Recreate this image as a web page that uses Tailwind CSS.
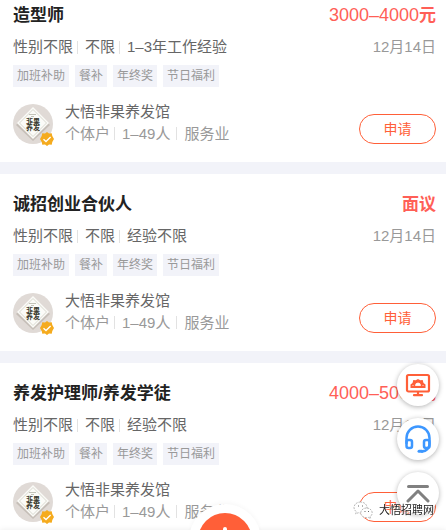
<!DOCTYPE html>
<html lang="zh-CN">
<head>
    <meta charset="UTF-8">
    <meta name="viewport" content="width=device-width, initial-scale=1.0">
    <title>大悟招聘网</title>
    <script src="https://cdn.jsdelivr.net/npm/@tailwindcss/browser@4"></script>
</head>
<body class="bg-[#f2f3f9] font-['Liberation_Sans','Noto_Sans_CJK_SC',sans-serif] text-[15px] text-[#666]">
    <!-- Shared drawings -->
    <svg class="hidden" aria-hidden="true">
        <symbol id="shopLogo" viewBox="0 0 40 40">
            <circle cx="20" cy="20" r="20" fill="#e0dad6"/>
            <path d="M20 5 37 21 20 37 3 21Z" fill="#c6bfb8"/>
            <path d="M20 3 36 19 20 35 4 19Z" fill="#fbfbf8"/>
            <path d="M20 5.500 33.500 19 20 32.500 6.500 19Z" fill="none" stroke="#cfd0c4" stroke-width=".8"/>
            <path d="M16 10.500h7M18 12.500h3" stroke="#a9aa9c" stroke-width=".7"/>
            <text x="20" y="19.500" text-anchor="middle" font-size="7" font-weight="700" fill="#3c3c30">非果</text>
            <text x="20" y="26" text-anchor="middle" font-size="7" font-weight="700" fill="#3c3c30">养发</text>
        </symbol>
        <symbol id="verified" viewBox="0 0 14 14">
            <path d="M7 0 9 1.500 11.700 1.300 12.300 4 14 7 12.300 10 11.700 12.700 9 12.500 7 14 5 12.500 2.300 12.700 1.700 10 0 7 1.700 4 2.300 1.300 5 1.500Z" fill="#f5ab1e"/>
            <path d="m3.500 7.200 2.500 2.300 4.600-4.500" fill="none" stroke="#fff" stroke-width="1.300"/>
        </symbol>
    </svg>

    <div class="h-screen overflow-hidden">
        <main class="-mt-[15px] space-y-3">
            <article class="bg-white pt-[17px] pr-[10px] pb-[18px] pl-[13px]">
                <div class="flex justify-between leading-7">
                    <h2 class="text-[17px] font-bold text-[#222]">造型师</h2>
                    <p class="text-[17px] font-bold text-[#ff5f57]"><span class="text-[18px] leading-none font-normal">3000–4000</span>元</p>
                </div>
                <div class="mt-[7px] flex items-center leading-5">
                    <span>性别不限</span>
                    <i class="mr-[7px] ml-1 h-[13px] w-px bg-[#e2e2e2]"></i>
                    <span>不限</span>
                    <i class="mr-[7px] ml-1 h-[13px] w-px bg-[#e2e2e2]"></i>
                    <span>1–3年工作经验</span>
                    <time class="ml-auto text-[#999]">12月14日</time>
                </div>
                <ul class="mt-2 flex gap-1.5 text-xs leading-[22px] text-[#999]">
                    <li class="bg-[#f2f3f9] px-1">加班补助</li>
                    <li class="bg-[#f2f3f9] px-1">餐补</li>
                    <li class="bg-[#f2f3f9] px-1">年终奖</li>
                    <li class="bg-[#f2f3f9] px-1">节日福利</li>
                </ul>
                <div class="mt-[14px] flex items-end">
                    <div class="relative mr-3 size-10">
                        <svg class="size-10"><use href="#shopLogo"/></svg>
                        <svg class="absolute -right-px -bottom-0.5 size-[14px]"><use href="#verified"/></svg>
                    </div>
                    <div>
                        <h3 class="leading-[22px]">大悟非果养发馆</h3>
                        <p class="flex items-center leading-[21px] text-[#999]">
                            <span>个体户</span>
                            <i class="mr-[7px] ml-1 h-[13px] w-px bg-[#e2e2e2]"></i>
                            <span>1–49人</span>
                            <i class="mr-[7px] ml-1.5 h-[13px] w-px bg-[#e2e2e2]"></i>
                            <span>服务业</span>
                        </p>
                    </div>
                    <button type="button" class="ml-auto h-[30px] w-[77px] rounded-full border border-[#ff5f38] text-[14px] leading-[26px] text-[#ff5f38]">申请</button>
                </div>
            </article>

            <article class="bg-white pt-[17px] pr-[10px] pb-[18px] pl-[13px]">
                <div class="flex justify-between leading-7">
                    <h2 class="text-[17px] font-bold text-[#222]">诚招创业合伙人</h2>
                    <p class="text-[17px] font-bold text-[#ff5f57]">面议</p>
                </div>
                <div class="mt-[7px] flex items-center leading-5">
                    <span>性别不限</span>
                    <i class="mr-[7px] ml-1 h-[13px] w-px bg-[#e2e2e2]"></i>
                    <span>不限</span>
                    <i class="mr-[7px] ml-1 h-[13px] w-px bg-[#e2e2e2]"></i>
                    <span>经验不限</span>
                    <time class="ml-auto text-[#999]">12月14日</time>
                </div>
                <ul class="mt-2 flex gap-1.5 text-xs leading-[22px] text-[#999]">
                    <li class="bg-[#f2f3f9] px-1">加班补助</li>
                    <li class="bg-[#f2f3f9] px-1">餐补</li>
                    <li class="bg-[#f2f3f9] px-1">年终奖</li>
                    <li class="bg-[#f2f3f9] px-1">节日福利</li>
                </ul>
                <div class="mt-[14px] flex items-end">
                    <div class="relative mr-3 size-10">
                        <svg class="size-10"><use href="#shopLogo"/></svg>
                        <svg class="absolute -right-px -bottom-0.5 size-[14px]"><use href="#verified"/></svg>
                    </div>
                    <div>
                        <h3 class="leading-[22px]">大悟非果养发馆</h3>
                        <p class="flex items-center leading-[21px] text-[#999]">
                            <span>个体户</span>
                            <i class="mr-[7px] ml-1 h-[13px] w-px bg-[#e2e2e2]"></i>
                            <span>1–49人</span>
                            <i class="mr-[7px] ml-1.5 h-[13px] w-px bg-[#e2e2e2]"></i>
                            <span>服务业</span>
                        </p>
                    </div>
                    <button type="button" class="ml-auto h-[30px] w-[77px] rounded-full border border-[#ff5f38] text-[14px] leading-[26px] text-[#ff5f38]">申请</button>
                </div>
            </article>

            <article class="bg-white pt-[17px] pr-[10px] pb-[18px] pl-[13px]">
                <div class="flex justify-between leading-7">
                    <h2 class="text-[17px] font-bold text-[#222]">养发护理师/养发学徒</h2>
                    <p class="text-[17px] font-bold text-[#ff5f57]"><span class="text-[18px] leading-none font-normal">4000–5000</span>元</p>
                </div>
                <div class="mt-[7px] flex items-center leading-5">
                    <span>性别不限</span>
                    <i class="mr-[7px] ml-1 h-[13px] w-px bg-[#e2e2e2]"></i>
                    <span>不限</span>
                    <i class="mr-[7px] ml-1 h-[13px] w-px bg-[#e2e2e2]"></i>
                    <span>经验不限</span>
                    <time class="ml-auto text-[#999]">12月14日</time>
                </div>
                <ul class="mt-2 flex gap-1.5 text-xs leading-[22px] text-[#999]">
                    <li class="bg-[#f2f3f9] px-1">加班补助</li>
                    <li class="bg-[#f2f3f9] px-1">餐补</li>
                    <li class="bg-[#f2f3f9] px-1">年终奖</li>
                    <li class="bg-[#f2f3f9] px-1">节日福利</li>
                </ul>
                <div class="mt-[14px] flex items-end">
                    <div class="relative mr-3 size-10">
                        <svg class="size-10"><use href="#shopLogo"/></svg>
                        <svg class="absolute -right-px -bottom-0.5 size-[14px]"><use href="#verified"/></svg>
                    </div>
                    <div>
                        <h3 class="leading-[22px]">大悟非果养发馆</h3>
                        <p class="flex items-center leading-[21px] text-[#999]">
                            <span>个体户</span>
                            <i class="mr-[7px] ml-1 h-[13px] w-px bg-[#e2e2e2]"></i>
                            <span>1–49人</span>
                            <i class="mr-[7px] ml-1.5 h-[13px] w-px bg-[#e2e2e2]"></i>
                            <span>服务业</span>
                        </p>
                    </div>
                    <button type="button" class="ml-auto h-[30px] w-[77px] rounded-full border border-[#ff5f38] text-[14px] leading-[26px] text-[#ff5f38]">申请</button>
                </div>
            </article>
        </main>
    </div>

    <!-- Publish button, rising out of the tab bar -->
    <div class="fixed inset-x-0 top-full h-14 bg-white shadow-[0_0_6px_rgba(0,0,0,0.08)]">
        <button type="button" aria-label="发布" class="absolute -top-[26px] left-1/2 ml-[2px] flex size-[72px] -translate-x-1/2 items-center justify-center rounded-full bg-white shadow-[0_-1px_5px_rgba(0,0,0,0.04)]">
            <svg class="size-[54px]" viewBox="0 0 54 54">
                <circle cx="27" cy="27" r="27" fill="#ff5f38"/>
                <path d="M27 16v22M16 27h22" stroke="#fff" stroke-width="4" stroke-linecap="round"/>
            </svg>
        </button>
    </div>

    <!-- Floating shortcuts -->
    <nav class="fixed right-[7px] bottom-4 flex flex-col gap-3">
        <a href="#" aria-label="工作台" class="flex size-[42px] items-center justify-center rounded-full bg-white shadow-[0_1px_5px_rgba(0,0,0,0.3)]">
            <svg class="size-[26px]" viewBox="0 0 26 26" fill="none" stroke="#ff5f38" stroke-width="2.200">
                <rect x="2" y="3" width="22" height="16.500" rx="1.500"/>
                <path d="M13 20v3M9 23.200h8" stroke-linecap="round"/>
                <path d="M5.500 16v-3.500l2-1.500.8-3 2.400.2L13 7l2.300 1.200 2.400-.2.800 3 2 1.500V16z" fill="#ff5f38" stroke="none"/>
                <path d="M10.500 13.500a2.500 2.500 0 0 1 5 0zM7.500 13.500h1M17.500 13.500h1" fill="#fff" stroke="#fff" stroke-width=".8"/>
            </svg>
        </a>
        <a href="#" aria-label="客服" class="flex size-[42px] items-center justify-center rounded-full bg-white shadow-[0_1px_5px_rgba(0,0,0,0.3)]">
            <svg class="size-[28px]" viewBox="0 0 28 28" fill="none" stroke="#3d97ff" stroke-width="2.500" stroke-linecap="round">
                <path d="M2.500 18v-5a11.500 11.500 0 0 1 23 0v6c0 4-3 7-7.500 7.500"/>
                <rect x="2.500" y="15" width="5.500" height="8" rx="2"/>
                <rect x="20" y="15" width="5.500" height="8" rx="2"/>
                <path d="M15 26.200h3" stroke-width="3"/>
            </svg>
        </a>
        <a href="#" aria-label="返回顶部" class="flex size-[42px] items-center justify-center rounded-full bg-white shadow-[0_1px_5px_rgba(0,0,0,0.3)]">
            <svg class="size-[24px]" viewBox="0 0 24 24" fill="none" stroke="#808080" stroke-width="3" stroke-linecap="round" stroke-linejoin="round">
                <path d="M2.500 5.500h19M2 20 12 10 22 20"/>
            </svg>
        </a>
    </nav>

    <!-- Watermark -->
    <div class="pointer-events-none fixed right-3 bottom-2.5 flex items-center gap-1.5">
        <svg class="size-[20px]" viewBox="0 0 20 20" fill="#fff" stroke="#999" stroke-width=".7" stroke-dasharray="2 1">
            <path d="M7.500 2C3.800 2 1 4.500 1 7.500c0 1.700.9 3.200 2.300 4.200L2.700 14l2.500-1.300c.8.2 1.500.3 2.300.3 3.700 0 6.500-2.500 6.500-5.500S11.200 2 7.500 2z"/>
            <path d="M13.500 8c-3.200 0-5.700 2.200-5.700 4.900s2.500 4.800 5.700 4.800c.7 0 1.300-.1 1.900-.3l2.200 1.100-.5-1.900c1.300-.9 2.100-2.200 2.100-3.700 0-2.700-2.500-4.900-5.700-4.900z"/>
            <path d="M5 6h1M9 6h1M11.500 11.500h1M15 11.500h1" stroke="#666" stroke-width="1" stroke-dasharray="none"/>
        </svg>
        <span class="text-[11px] leading-5 text-[#222] [text-shadow:0_0_2px_#fff,0_0_2px_#fff]">大悟招聘网</span>
    </div>
</body>
</html>
